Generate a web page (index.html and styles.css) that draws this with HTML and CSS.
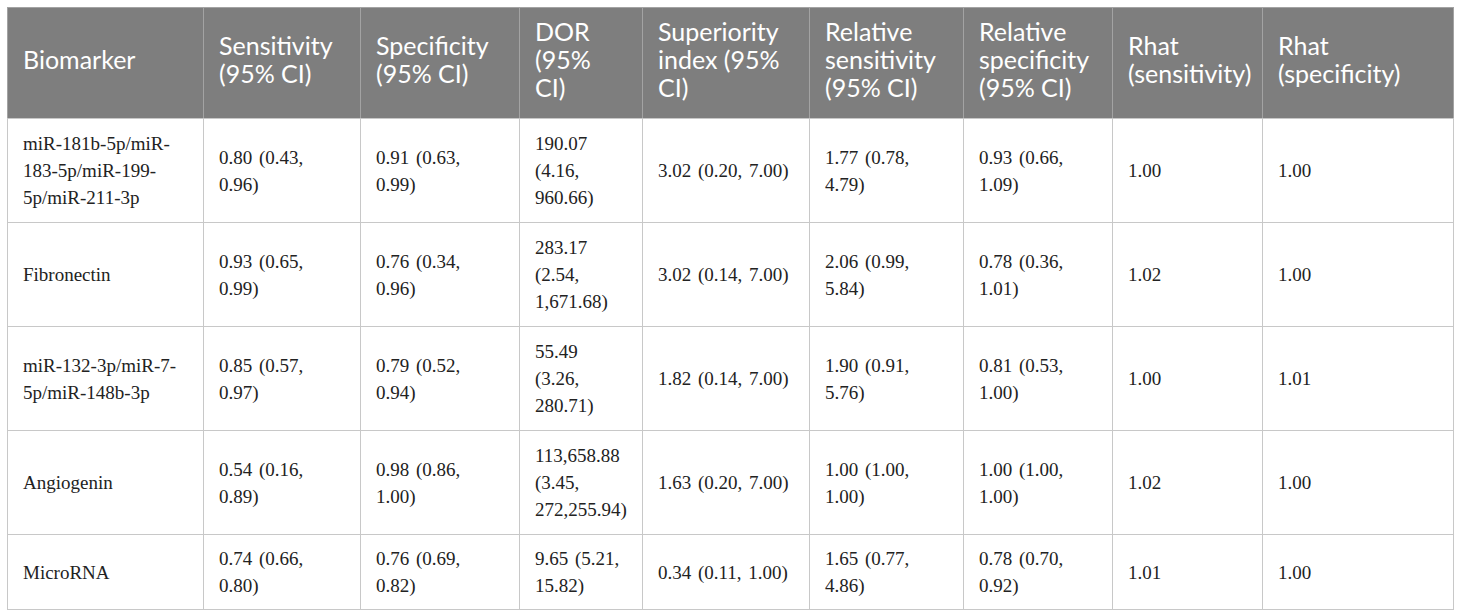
FILE: index.html
```html
<!DOCTYPE html>
<html>
<head>
<meta charset="utf-8">
<link rel="stylesheet" href="styles.css">
</head>
<body>
<table class="data">
<colgroup>
<col class="c1"><col class="c2"><col class="c3"><col class="c4"><col class="c5"><col class="c6"><col class="c7"><col class="c8"><col class="c9">
</colgroup>
<thead>
<tr>
<th>Biomarker</th>
<th>Sensitivity (95% CI)</th>
<th>Specificity (95% CI)</th>
<th>DOR (95% CI)</th>
<th>Superiority index (95% CI)</th>
<th>Relative sensitivity (95% CI)</th>
<th>Relative specificity (95% CI)</th>
<th>Rhat (sensitivity)</th>
<th>Rhat (specificity)</th>
</tr>
</thead>
<tbody>
<tr>
<td>miR-181b-5p/miR-183-5p/miR-199-5p/miR-211-3p</td>
<td>0.80 (0.43, 0.96)</td>
<td>0.91 (0.63, 0.99)</td>
<td>190.07 (4.16, 960.66)</td>
<td>3.02 (0.20, 7.00)</td>
<td>1.77 (0.78, 4.79)</td>
<td>0.93 (0.66, 1.09)</td>
<td>1.00</td>
<td>1.00</td>
</tr>
<tr>
<td>Fibronectin</td>
<td>0.93 (0.65, 0.99)</td>
<td>0.76 (0.34, 0.96)</td>
<td>283.17 (2.54, 1,671.68)</td>
<td>3.02 (0.14, 7.00)</td>
<td>2.06 (0.99, 5.84)</td>
<td>0.78 (0.36, 1.01)</td>
<td>1.02</td>
<td>1.00</td>
</tr>
<tr>
<td>miR-132-3p/miR-7-5p/miR-148b-3p</td>
<td>0.85 (0.57, 0.97)</td>
<td>0.79 (0.52, 0.94)</td>
<td>55.49 (3.26, 280.71)</td>
<td>1.82 (0.14, 7.00)</td>
<td>1.90 (0.91, 5.76)</td>
<td>0.81 (0.53, 1.00)</td>
<td>1.00</td>
<td>1.01</td>
</tr>
<tr>
<td>Angiogenin</td>
<td>0.54 (0.16, 0.89)</td>
<td>0.98 (0.86, 1.00)</td>
<td>113,658.88 (3.45, 272,255.94)</td>
<td>1.63 (0.20, 7.00)</td>
<td>1.00 (1.00, 1.00)</td>
<td>1.00 (1.00, 1.00)</td>
<td>1.02</td>
<td>1.00</td>
</tr>
<tr>
<td>MicroRNA</td>
<td>0.74 (0.66, 0.80)</td>
<td>0.76 (0.69, 0.82)</td>
<td>9.65 (5.21, 15.82)</td>
<td>0.34 (0.11, 1.00)</td>
<td>1.65 (0.77, 4.86)</td>
<td>0.78 (0.70, 0.92)</td>
<td>1.01</td>
<td>1.00</td>
</tr>
</tbody>
</table>
</body>
</html>
```

FILE: styles.css
```css
html, body {
  margin: 0;
  padding: 0;
  background: #ffffff;
}
body {
  padding: 7px;
}
.data {
  width: 1446px;
  table-layout: fixed;
  border-collapse: collapse;
}
.c1 { width: 196px; }
.c2 { width: 157px; }
.c3 { width: 159px; }
.c4 { width: 123px; }
.c5 { width: 167px; }
.c6 { width: 154px; }
.c7 { width: 149px; }
.c8 { width: 150px; }
.c9 { width: 191px; }
.data th {
  background: #7e7e7e;
  color: #ffffff;
  font-family: Lato, "Open Sans", sans-serif;
  font-weight: 400;
  font-size: 25px;
  line-height: 28px;
  text-align: left;
  vertical-align: middle;
  padding: 2px 17px 10px 15px;
  height: 111px;
  box-sizing: border-box;
  border: 1px solid #a3a3a3;
  border-bottom-color: #c8c8c8;
}
.data td {
  font-family: "Liberation Serif", "DejaVu Serif", serif;
  font-size: 19px;
  line-height: 27px;
  color: #222222;
  text-align: left;
  vertical-align: middle;
  padding: 8px 15px;
  border: 1px solid #c8c8c8;
  height: 104px;
  box-sizing: border-box;
  word-spacing: 2px;
}
.data tbody tr:last-child td {
  height: 75px;
}
```
